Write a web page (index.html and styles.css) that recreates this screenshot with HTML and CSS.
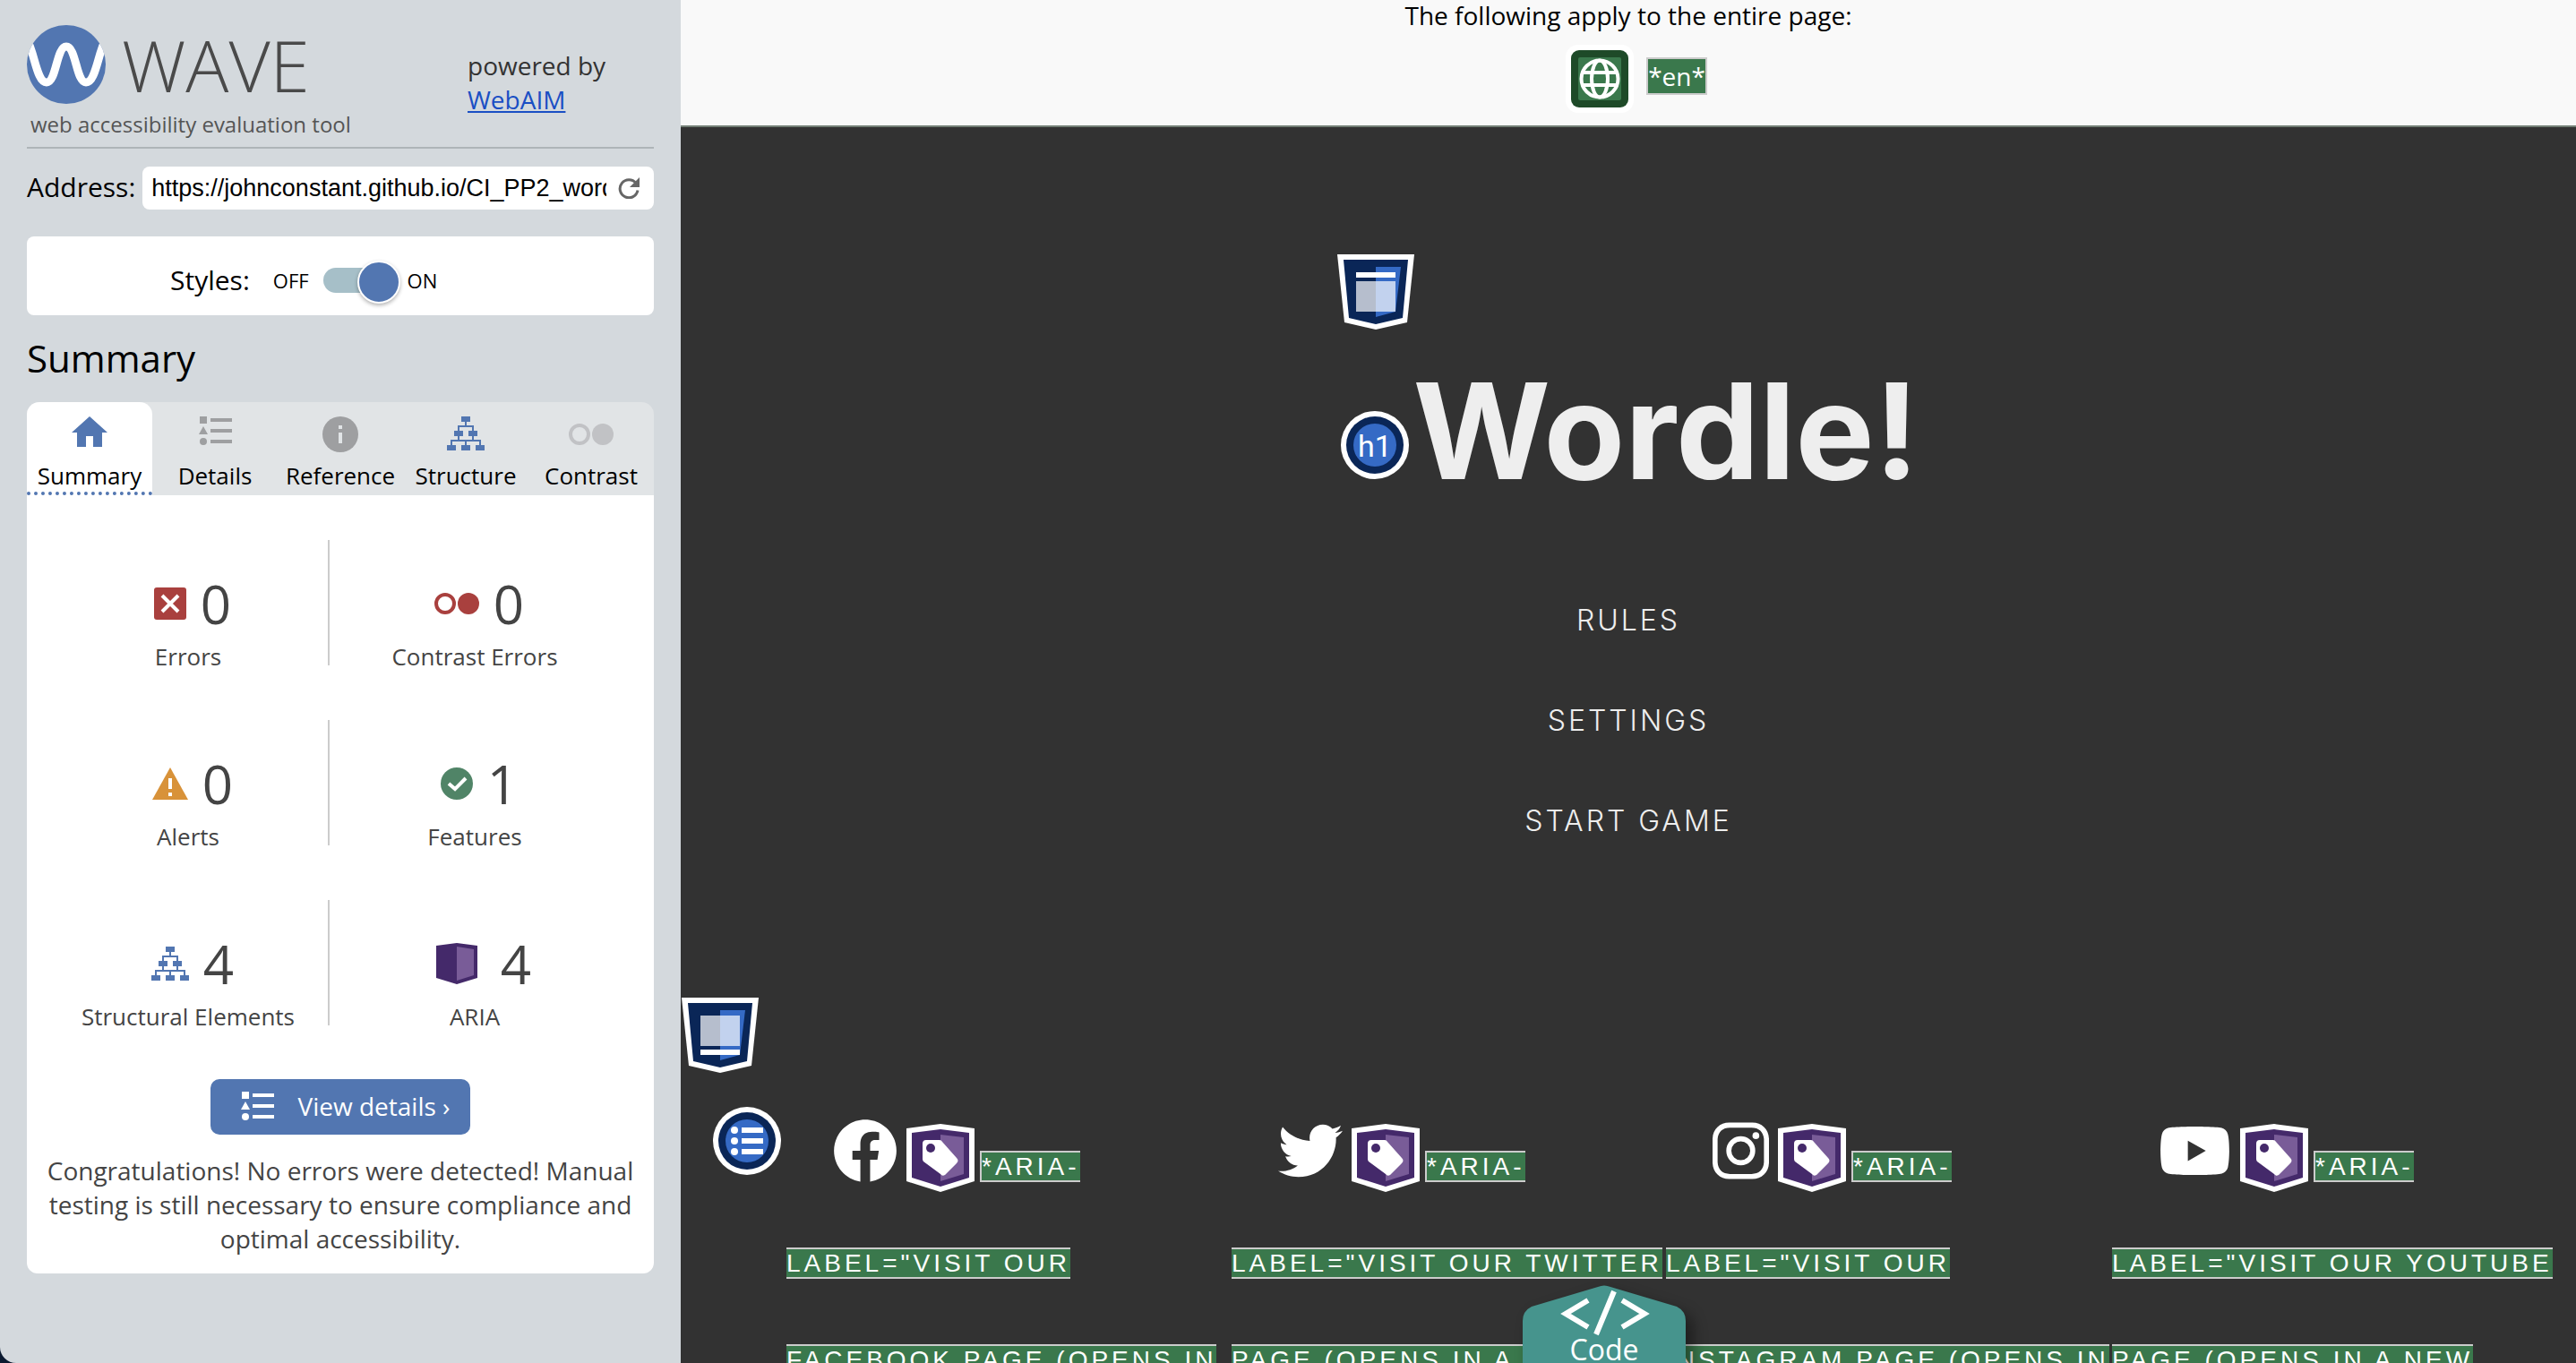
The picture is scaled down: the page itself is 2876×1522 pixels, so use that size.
FILE: index.html
```html
<!DOCTYPE html>
<html lang="en">
<head>
<meta charset="utf-8">
<title>WAVE Report</title>
<link rel="stylesheet" href="styles.css">
</head>
<body>
<svg class="defs" aria-hidden="true">
  <symbol id="list" viewBox="0 0 37 32"><path d="M1 0h8v8H1zM13 2h24v4H13zM5 11l5 9H0zM13 14h24v4H13zM13 26h24v4H13z"/><circle cx="5" cy="28" r="4"/></symbol>
  <symbol id="tree" viewBox="0 0 42 38"><path d="M16 0h10v6H16zM8 16h10v6H8zM24 16h10v6H24zM0 32h10v6H0zM16 32h10v6H16zM32 32h10v6H32z"/><path d="M21 6v5M13 16v-5h16v5M13 22v5M29 22v5M5 32v-5h32v5M21 27v5" fill="none" stroke="currentColor" stroke-width="2"/></symbol>
  <symbol id="pair" viewBox="0 0 50 24"><circle cx="12" cy="12" r="10" fill="none" stroke="currentColor" stroke-width="4"/><circle cx="38" cy="12" r="12"/></symbol>
  <symbol id="tag" viewBox="0 0 76 76"><path fill="#fff" d="M0 5 38 0l38 5v59L38 76 0 64z"/><path fill="#44296a" d="M6 10 38 6l32 4v50L38 70 6 60z"/><path fill="#795c98" d="m38 12 26 3v41l-26 8z"/><path fill="#fff" d="M18 22q0-4 4-4h15q2 0 3 2l16 18q3 3 0 6L43 57q-3 2-5-1L19 42q-1-1-1-3z"/><circle cx="27" cy="27" r="5" fill="#44296a"/></symbol>
</svg>
<div class="app">
  <aside class="sidebar">
    <header class="brand">
      <div>
        <div class="logo">
          <svg width="88" height="88" viewBox="0 0 88 88" aria-hidden="true"><clipPath id="disc"><circle cx="44" cy="44" r="44"/></clipPath><circle cx="44" cy="44" r="44" fill="#5276b1"/><path clip-path="url(#disc)" d="M0 16C9 32 11 64 22 64S33 24 44 24s11 40 22 40 13-32 22-48" fill="none" stroke="#fff" stroke-width="9"/></svg>
          <span class="logo-name">WAVE</span>
        </div>
        <p class="tagline">web accessibility evaluation tool</p>
      </div>
      <p class="powered">powered by<br><a href="#">WebAIM</a></p>
    </header>
    <form class="address">
      <label for="url">Address:</label>
      <div class="url-box">
        <input id="url" type="text" value="https://johnconstant.github.io/CI_PP2_wordle/">
        <button type="button" class="reload" aria-label="Reload"><svg width="24" height="24" viewBox="0 0 24 24"><path d="M20 6.500A10 10 0 1 0 22 14.500" fill="none" stroke="#666" stroke-width="3"/><path d="M24 0v11H13z" fill="#666"/></svg></button>
      </div>
    </form>
    <div class="styles-box">
      <label for="styles">Styles:</label>
      <span class="state">OFF</span>
      <input id="styles" class="switch" type="checkbox" checked>
      <span class="state">ON</span>
    </div>
    <h2>Summary</h2>
    <div class="tabs">
      <button type="button" class="tab active"><svg width="40" height="40" viewBox="0 0 40 40"><path d="M20 0 40 18h-6v16H24V22h-8v12H6V18H0z"/></svg>Summary</button>
      <button type="button" class="tab muted"><svg width="37" height="32"><use href="#list"/></svg>Details</button>
      <button type="button" class="tab muted"><svg width="40" height="40" viewBox="0 0 40 40"><circle cx="20" cy="20" r="20"/><path fill="#e1e4e6" d="M18 10h4v4h-4zM18 18h4v12h-4z"/></svg>Reference</button>
      <button type="button" class="tab"><svg width="42" height="38"><use href="#tree"/></svg>Structure</button>
      <button type="button" class="tab faint"><svg width="50" height="40" viewBox="0 0 50 40"><use href="#pair" y="8" width="50" height="24"/></svg>Contrast</button>
    </div>
    <section class="panel">
      <ul class="counts">
        <li class="red"><div class="count"><svg width="36" height="36" viewBox="0 0 36 36"><rect width="36" height="36" rx="3"/><path d="m9 9 18 18M27 9 9 27" stroke="#fff" stroke-width="4"/></svg>0</div>Errors</li>
        <li class="red"><div class="count"><svg width="50" height="24"><use href="#pair"/></svg>0</div>Contrast Errors</li>
        <li class="orange"><div class="count"><svg width="40" height="36" viewBox="0 0 40 36"><path d="m20 0 20 36H0z"/><path fill="#fff" d="M18 12h4v12h-4zM18 28h4v4h-4z"/></svg>0</div>Alerts</li>
        <li class="green"><div class="count"><svg width="36" height="36" viewBox="0 0 36 36"><circle cx="18" cy="18" r="18"/><path d="m9 18 7 6L28 12" fill="none" stroke="#fff" stroke-width="4"/></svg>1</div>Features</li>
        <li class="blue"><div class="count"><svg width="42" height="38"><use href="#tree"/></svg>4</div>Structural Elements</li>
        <li class="purple"><div class="count"><svg width="66" height="46" viewBox="0 0 66 46"><path d="m10 3 23-3 23 3v36l-23 7-23-7z"/><path fill="#795c98" d="m33 4 19 3v29l-19 6z"/></svg>4</div>ARIA</li>
      </ul>
      <button type="button" class="view"><svg width="37" height="32"><use href="#list"/></svg>View details ›</button>
      <p class="congrats">Congratulations! No errors were detected! Manual testing is still necessary to ensure compliance and optimal accessibility.</p>
    </section>
  </aside>
  <main class="page">
    <header class="notice">
      <p>The following apply to the entire page:</p>
      <div class="notice-row">
        <svg width="76" height="76" viewBox="0 0 76 76"><rect width="76" height="76" rx="14" fill="#fff"/><rect x="6" y="6" width="64" height="64" rx="9" fill="#1e4a28"/><rect x="14" y="14" width="48" height="48" rx="2" fill="#3a784c"/><g fill="none" stroke="#fff" stroke-width="4"><circle cx="38" cy="38" r="20.500"/><ellipse cx="38" cy="38" rx="9" ry="20.500"/><path d="M19 31h38M19 45h38"/></g></svg>
        <span class="lang">*en*</span>
      </div>
    </header>
    <section class="hero">
      <div class="title">
        <svg width="86" height="84" viewBox="0 0 86 84"><path fill="#fff" d="M0 0h86l-8 76-35 8-35-8z"/><path fill="#0a2657" d="M7 6h72l-6 65-30 7-30-7z"/><path fill="#356ac5" d="M43 14h28l-6 50-22 6z"/><path fill="#fff" d="M21 20h44v6H21z"/><path fill="#fff" fill-opacity=".7" d="M21 30h44v34H21z"/></svg>
        <h1><svg width="76" height="76" viewBox="0 0 76 76"><circle cx="38" cy="38" r="38" fill="#fff"/><circle cx="38" cy="38" r="32" fill="#0a2657"/><circle cx="38" cy="38" r="24" fill="#356ac5"/><text x="38" y="51" text-anchor="middle" class="badge-text">h1</text></svg>Wordle!</h1>
      </div>
      <nav class="menu">
        <a href="#">RULES</a>
        <a href="#">SETTINGS</a>
        <a href="#">START GAME</a>
      </nav>
    </section>
    <footer class="footer">
      <svg class="landmark" width="86" height="84" viewBox="0 0 86 84"><path fill="#fff" d="M0 0h86l-8 76-35 8-35-8z"/><path fill="#0a2657" d="M7 6h72l-6 65-30 7-30-7z"/><path fill="#356ac5" d="M43 14h28l-6 50-22 6z"/><path fill="#fff" d="M21 58h44v6H21z"/><path fill="#fff" fill-opacity=".7" d="M21 20h44v34H21z"/></svg>
      <div class="social-row">
        <svg class="list-badge" width="76" height="76" viewBox="0 0 76 76"><circle cx="38" cy="38" r="38" fill="#fff"/><circle cx="38" cy="38" r="32" fill="#0a2657"/><circle cx="38" cy="38" r="24" fill="#356ac5"/><g fill="#fff"><circle cx="24" cy="26" r="4"/><circle cx="24" cy="38" r="4"/><circle cx="24" cy="50" r="4"/><path d="M32 23h24v6H32zM32 35h24v6H32zM32 47h24v6H32z"/></g></svg>
        <ul class="social">
          <li><a href="#"><svg class="glyph" width="72" height="72" viewBox="0 0 512 512"><path d="M504 256C504 119 393 8 256 8S8 119 8 256c0 123.780 90.690 226.380 209.250 245V327.690h-63V256h63v-54.640c0-62.150 37-96.480 93.670-96.480 27.140 0 55.520 4.840 55.520 4.840v61h-31.280c-30.800 0-40.410 19.120-40.410 38.730V256h68.780l-11 71.690h-57.780V501C413.310 482.380 504 379.780 504 256z"/></svg><svg class="aria" width="76" height="76"><use href="#tag"/></svg><span class="aria-text">*ARIA-<br>LABEL="VISIT OUR<br>FACEBOOK PAGE (OPENS IN<br>A NEW TAB)"*</span></a></li>
          <li><a href="#"><svg class="glyph" width="72" height="72" viewBox="0 0 512 512"><path d="M459.370 151.716c.325 4.548.325 9.097.325 13.645 0 138.720-105.583 298.558-298.558 298.558-59.452 0-114.680-17.219-161.137-47.106 8.447.974 16.568 1.299 25.340 1.299 49.055 0 94.213-16.568 130.274-44.832-46.132-.975-84.792-31.188-98.112-72.772 6.498.974 12.995 1.624 19.818 1.624 9.421 0 18.843-1.300 27.614-3.573-48.081-9.747-84.143-51.980-84.143-102.985v-1.299c13.969 7.797 30.214 12.670 47.431 13.319-28.264-18.843-46.781-51.005-46.781-87.391 0-19.492 5.197-37.360 14.294-52.954 51.655 63.675 129.300 105.258 216.365 109.807-1.624-7.797-2.599-15.918-2.599-24.040 0-57.828 46.782-104.934 104.934-104.934 30.213 0 57.502 12.670 76.670 33.137 23.715-4.548 46.456-13.320 66.599-25.340-7.798 24.366-24.366 44.833-46.132 57.827 21.117-2.273 41.584-8.122 60.426-16.243-14.292 20.791-32.161 39.308-52.628 54.253z"/></svg><svg class="aria" width="76" height="76"><use href="#tag"/></svg><span class="aria-text">*ARIA-<br>LABEL="VISIT OUR TWITTER<br>PAGE (OPENS IN A NEW<br>TAB)"*</span></a></li>
          <li><a href="#"><svg class="glyph" width="63" height="72" viewBox="0 0 448 512"><path fill-rule="evenodd" d="M132 32h184c73 0 129 51 132 128v192c-3 77-59 128-132 128H132C59 480 3 429 0 352V160C3 83 59 32 132 32zm6 40C80 72 43 106 40 165v182c3 59 40 93 98 93h172c58 0 95-34 98-93V165c-3-59-40-93-98-93zM224 141a115 115 0 1 1 0 230 115 115 0 0 1 0-230zm0 40a75 75 0 1 0 0 150 75 75 0 0 0 0-150z"/><circle cx="344" cy="136" r="27"/></svg><svg class="aria" width="76" height="76"><use href="#tag"/></svg><span class="aria-text">*ARIA-<br>LABEL="VISIT OUR<br>INSTAGRAM PAGE (OPENS IN<br>A NEW TAB)"*</span></a></li>
          <li><a href="#"><svg class="glyph" width="81" height="72" viewBox="0 0 576 512"><path d="M549.655 124.083c-6.281-23.650-24.787-42.276-48.284-48.597C458.781 64 288 64 288 64S117.220 64 74.629 75.486c-23.497 6.322-42.003 24.947-48.284 48.597-11.412 42.867-11.412 132.305-11.412 132.305s0 89.438 11.412 132.305c6.281 23.650 24.787 41.500 48.284 47.821C117.220 448 288 448 288 448s170.780 0 213.371-11.486c23.497-6.321 42.003-24.171 48.284-47.821 11.412-42.867 11.412-132.305 11.412-132.305s0-89.438-11.412-132.305zm-317.510 213.508V175.185l142.739 81.205-142.739 81.201z"/></svg><svg class="aria" width="76" height="76"><use href="#tag"/></svg><span class="aria-text">*ARIA-<br>LABEL="VISIT OUR YOUTUBE<br>PAGE (OPENS IN A NEW<br>TAB)"*</span></a></li>
        </ul>
      </div>
    </footer>
    <button type="button" class="code">
      <svg class="code-shape" width="182" height="110" viewBox="0 0 182 110" aria-hidden="true"><path fill="#46948d" d="M84 2q7-3 14 0l74 22q10 5 10 16v70H0V40q0-11 10-16z"/><path d="M73 17 48 32l25 15M111 17l25 15-25 15M102 7 82 55" fill="none" stroke="#fff" stroke-width="6"/></svg>
      <span>Code</span>
    </button>
  </main>
</div>
</body>
</html>
```
FILE: styles.css
```css
* { box-sizing: border-box; }

body {
  margin: 0;
  background: #0b1a30;
  font-family: "Open Sans", "Noto Sans", sans-serif;
  font-size: 28px;
  line-height: 38px;
}

h1, h2, p, ul { margin: 0; padding: 0; }
ul { list-style: none; }
button { border: 0; padding: 0; background: none; font: inherit; color: inherit; }
svg { fill: currentColor; flex: none; }
.defs { position: absolute; width: 0; height: 0; }

.app {
  display: grid;
  grid-template-columns: 760px 1fr;
  height: 100vh;
  overflow: hidden;
  border-bottom-left-radius: 18px;
}

/* Sidebar */
.sidebar { background: #d4d9dd; padding: 28px 30px; }

.brand {
  display: flex;
  justify-content: space-between;
  height: 138px;
  border-bottom: 2px solid #aeb5b8;
}
.logo { display: flex; gap: 18px; height: 88px; }
.logo-name { font-size: 80px; font-weight: 300; line-height: 88px; color: #4a4a4a; }
.tagline { padding: 4px 4px 0; font-size: 24px; line-height: 38px; color: #555; }
.powered { width: 208px; padding-top: 26px; color: #333; }
.powered a { color: #1a4fc4; }

.address { display: flex; align-items: center; gap: 8px; margin-top: 20px; font-size: 30px; }
.address label { padding-bottom: 2px; }
.url-box {
  flex: 1;
  display: flex;
  align-items: center;
  height: 48px;
  padding: 0 16px 0 10px;
  border-radius: 8px;
  background: #fff;
}
.url-box input {
  flex: 1;
  min-width: 0;
  margin-right: 13px;
  padding: 0;
  border: 0;
  outline: 0;
  background: none;
  font: 27px "Liberation Sans", Arial, sans-serif;
}
.reload { display: flex; }

.styles-box {
  display: flex;
  align-items: center;
  height: 88px;
  margin-top: 30px;
  padding: 10px 0 0 160px;
  border-radius: 8px;
  background: #fff;
  font-size: 30px;
}
.styles-box label { margin-right: 26px; }
.state { font-size: 22px; }
.switch {
  appearance: none;
  position: relative;
  width: 80px;
  height: 28px;
  margin: 0 14px 0 16px;
  border-radius: 14px;
  background: #a6bfc8;
}
.switch::after {
  content: "";
  position: absolute;
  right: -6px;
  top: -8px;
  width: 44px;
  height: 44px;
  border: 2px solid #fff;
  border-radius: 50%;
  background: #5276b1;
  box-shadow: 0 2px 4px rgba(0, 0, 0, .3);
}

h2 { margin: 18px 0 20px; font-size: 42px; font-weight: 400; line-height: 59px; }

.tabs {
  display: grid;
  grid-template-columns: repeat(5, 1fr);
  height: 104px;
  border-radius: 14px 14px 0 0;
  background: #e1e4e6;
  font-size: 26px;
}
.tab {
  display: flex;
  flex-direction: column;
  align-items: center;
  justify-content: space-between;
  padding-top: 16px;
  border-bottom: 4px solid transparent;
  line-height: 36px;
}
.tab svg { color: #5276b1; }
.tab.active { border-bottom: 4px dotted #5276b1; border-radius: 14px 14px 0 0; background: #fff; }
.tab.muted svg { color: #9e9fa1; }
.tab.faint svg { color: #c1c2c5; }

.panel {
  padding: 50px 20px 20px;
  border-radius: 0 0 12px 12px;
  background: #fff;
  color: #444;
  text-align: center;
}
.counts {
  display: grid;
  grid-template-columns: 314px 324px;
  row-gap: 61px;
  padding-left: 4px;
  font-size: 26px;
}
.counts li { height: 140px; padding-top: 38px; line-height: 36px; }
.counts li:nth-child(odd) { border-right: 2px solid #ccc; }
.count {
  display: flex;
  align-items: center;
  justify-content: center;
  gap: 16px;
  height: 66px;
  margin-bottom: 8px;
  padding-left: 10px;
  font-size: 60px;
}
.red svg { color: #a9403e; }
.orange svg { color: #d89239; }
.green svg { color: #508467; }
.blue svg { color: #5276b1; }
.purple svg { color: #44296a; }

.view {
  display: flex;
  align-items: center;
  justify-content: center;
  gap: 26px;
  width: 290px;
  height: 62px;
  margin: 60px auto 21px;
  padding: 0 0 2px 12px;
  border-radius: 10px;
  background: #5276b1;
  color: #fff;
}

/* Evaluated page */
.page { position: relative; overflow: hidden; background: #323232; color: #eee; }

.notice { height: 142px; border-bottom: 2px solid #737f75; background: #f9f9f9; color: #000; text-align: center; }
.notice p { line-height: 34px; }
.notice-row { display: flex; justify-content: center; gap: 14px; padding-top: 16px; padding-left: 18px; }
.lang { height: 42px; margin-top: 14px; border: 2px solid #ccc; background: #3a784c; color: #fff; }

.hero { display: flex; flex-direction: column; align-items: center; padding: 142px 0 177px; }
.title { display: flex; flex-direction: column; align-items: flex-start; gap: 42px; }
h1 {
  display: flex;
  gap: 4px;
  padding-left: 4px;
  font: 700 148px/144px Inter, sans-serif;
}
h1 svg { margin-top: 49px; }
.badge-text { font: 34px Roboto, sans-serif; fill: #fff; }

.menu { display: flex; flex-direction: column; align-items: center; gap: 72px; margin-top: 119px; }
.menu a {
  color: #eee;
  font: 300 32px/40px Inter, sans-serif;
  letter-spacing: 3px;
  text-decoration: none;
}

.landmark { display: block; margin-left: 1px; }
.social-row { display: flex; gap: 6px; padding: 38px 19px 0 36px; }
.list-badge { flex: none; }
.social {
  flex: 1;
  display: grid;
  grid-template-columns: 497fr 485fr 498fr 499fr;
  margin-top: 13px;
  font: 28px/108px "Liberation Sans", Arial, sans-serif;
  letter-spacing: 4px;
  white-space: nowrap;
}
.social li { min-width: 0; }
.social a { color: #fff; text-decoration: none; }
.glyph { margin: 0 10px 0 52px; vertical-align: -9px; }
.aria { margin-right: 6px; vertical-align: -19px; }
.aria-text { border: 2px solid #ccc; background: #3a784c; }

.code {
  position: absolute;
  left: calc(50% - 118px);
  bottom: -23px;
  width: 182px;
  height: 110px;
  color: #fff;
  font-size: 32px;
}
.code-shape { position: absolute; inset: 0; filter: drop-shadow(8px 8px 8px rgba(0, 0, 0, .4)); }
.code span { position: relative; display: block; padding-top: 34px; }
```
